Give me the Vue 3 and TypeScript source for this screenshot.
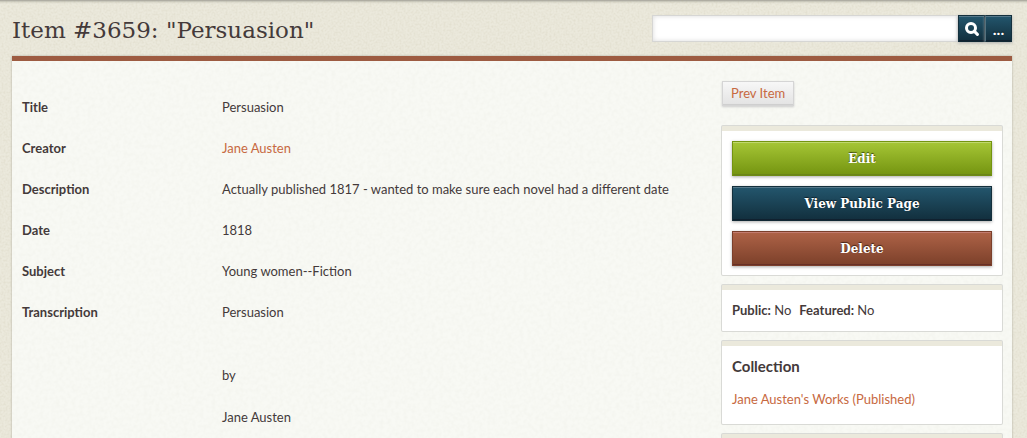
<script setup lang="ts">
import { ref } from 'vue'

interface Field {
  label: string
  lines: string[]
  href?: string
}

const query = ref<string>('')

const fields: Field[] = [
  { label: 'Title', lines: ['Persuasion'] },
  { label: 'Creator', lines: ['Jane Austen'], href: '#creator' },
  { label: 'Description', lines: ['Actually published 1817 - wanted to make sure each novel had a different date'] },
  { label: 'Date', lines: ['1818'] },
  { label: 'Subject', lines: ['Young women--Fiction'] },
  { label: 'Transcription', lines: ['Persuasion', '', 'by', 'Jane Austen'] },
]
</script>

<template>
  <div class="page">
    <svg class="grain" aria-hidden="true">
      <filter id="page-grain" x="0" y="0" width="100%" height="100%">
        <feTurbulence type="fractalNoise" baseFrequency="0.5" numOctaves="2" seed="4" />
        <feColorMatrix values="0 0 0 0 0.45  0 0 0 0 0.4  0 0 0 0 0.25  0.32 0 0 0 -0.12" />
      </filter>
      <rect width="100%" height="100%" filter="url(#page-grain)" />
    </svg>

    <header class="top">
      <h1>Item #3659: "Persuasion"</h1>
      <form class="search" role="search" @submit.prevent>
        <input v-model="query" type="text" aria-label="Search" />
        <button type="submit" class="blue" aria-label="Submit search">
          <svg viewBox="0 0 14 14" width="14" height="14" aria-hidden="true">
            <circle cx="6" cy="6" r="4.5" fill="none" stroke="#fff" stroke-width="3" />
            <path d="M9.4 9.4 12.4 12.4" stroke="#fff" stroke-width="3" stroke-linecap="round" />
          </svg>
        </button>
        <button type="button" class="blue more" aria-label="Advanced search">...</button>
      </form>
    </header>

    <main class="content">
      <svg class="grain" aria-hidden="true">
        <filter id="paper-grain" x="0" y="0" width="100%" height="100%">
          <feTurbulence type="fractalNoise" baseFrequency="0.25" numOctaves="2" seed="9" />
          <feColorMatrix values="0 0 0 0 0.5  0 0 0 0 0.5  0 0 0 0 0.4  0.13 0 0 0 -0.045" />
        </filter>
        <rect width="100%" height="100%" filter="url(#paper-grain)" />
      </svg>

      <dl class="fields">
        <div v-for="field in fields" :key="field.label" class="field">
          <dt>{{ field.label }}</dt>
          <dd>
            <template v-for="(line, i) in field.lines" :key="i">
              <p v-if="line"><a v-if="field.href" :href="field.href">{{ line }}</a><template v-else>{{ line }}</template></p>
              <br v-else />
            </template>
          </dd>
        </div>
      </dl>

      <aside class="side">
        <a class="prev" href="#prev">Prev Item</a>
        <section class="panel actions">
          <button type="button" class="green">Edit</button>
          <button type="button" class="blue">View Public Page</button>
          <button type="button" class="red">Delete</button>
        </section>
        <section class="panel status">
          <span><strong>Public:</strong> No</span>
          <span><strong>Featured:</strong> No</span>
        </section>
        <section class="panel collection">
          <h2>Collection</h2>
          <a href="#collection">Jane Austen's Works (Published)</a>
        </section>
        <section class="panel"></section>
      </aside>
    </main>
  </div>
</template>

<style>
body {
  margin: 0;
}
</style>

<style scoped>
.page {
  position: relative;
  isolation: isolate;
  display: flex;
  flex-direction: column;
  box-sizing: border-box;
  height: 100vh;
  overflow: hidden;
  padding: 0 15px 0 12px;
  background: #ebe9dc;
  box-shadow: inset 0 4px 3px -3px #8f8d85;
  color: #443a3a;
  font: 13px/21px Lato, 'Open Sans', sans-serif;
}
.grain {
  position: absolute;
  inset: 0;
  z-index: -1;
  width: 100%;
  height: 100%;
}
.top {
  display: flex;
  justify-content: space-between;
  align-items: flex-start;
  padding: 15px 0 14px;
}
h1 {
  margin: 0;
  padding-top: 3px;
  font: 23px/24px 'DejaVu Serif', serif;
}
.search {
  display: flex;
  width: 360px;
}
.search input {
  flex: 1;
  min-width: 0;
  box-sizing: border-box;
  height: 27px;
  padding: 0 8px;
  border: 1px solid #d6d6d4;
  border-right: 0;
  border-radius: 0;
  background: #fff;
  box-shadow: inset 0 0 5px #dcdcdc;
  font: inherit;
  color: inherit;
  outline: none;
}
button {
  padding: 0;
  border: 1px solid;
  color: #fff;
  font: bold 12px/20px 'DejaVu Serif', serif;
  text-shadow: 0 -1px 1px rgba(0, 0, 0, 0.6);
  cursor: pointer;
}
.search button {
  display: flex;
  align-items: center;
  justify-content: center;
  width: 27px;
  height: 27px;
}
.search .more {
  border-left-color: #55727e;
  font: bold 16px/20px Lato, sans-serif;
}
.green {
  border-color: #749410 #749410 #6d8a14;
  background: linear-gradient(#a6c636, #749410);
  box-shadow: inset 0 1px #c0d86e, inset 0 -1px #6a8518, 0 1px 3px #aaa;
}
.blue {
  border-color: #14303d #14303d #102733;
  background: linear-gradient(#23566d, #122f3d);
  box-shadow: inset 0 1px #55788a, inset 0 -1px #10212f, 0 1px 3px #aaa;
}
.red {
  border-color: #7b3f2b;
  background: linear-gradient(#ae6347, #7c402a);
  box-shadow: inset 0 1px #c37c70, inset 0 -1px #672f27, 0 1px 3px #aaa;
}
.content {
  position: relative;
  isolation: isolate;
  flex: 1 0 auto;
  display: flex;
  gap: 20px;
  padding: 20px 10px 0;
  border-top: 5px solid #9d5b41;
  background: #f8f9f4;
  box-shadow: 0 0 2px #aaa89c;
}
.fields {
  flex: 1;
  min-width: 0;
  margin: 0;
  padding-top: 16px;
}
.field {
  display: grid;
  grid-template-columns: 200px 1fr;
  margin-bottom: 20px;
}
dt,
strong {
  font-weight: bold;
}
dd {
  margin: 0;
}
p {
  margin: 0 0 21px;
}
p:last-child {
  margin-bottom: 0;
}
a {
  color: #c76941;
  text-decoration: none;
}
.side {
  display: flex;
  flex-direction: column;
  gap: 10px;
  width: 280px;
}
.prev {
  align-self: flex-start;
  margin-bottom: 10px;
  padding: 1px 8px;
  border: 1px solid #d5d5d5;
  background: linear-gradient(#f7f7f7, #e3e3e3);
  box-shadow: inset 0 -1px #cfcfcf, 0 1px 2px #ccc;
}
.panel {
  padding: 10px;
  border-top: 5px solid #ebe9dc;
  border-radius: 1px;
  background: #fff;
  box-shadow: 0 0 0 1px #d9dad6;
}
.actions {
  display: flex;
  flex-direction: column;
  gap: 10px;
  padding-bottom: 9px;
}
.actions button {
  height: 35px;
}
.status {
  display: flex;
  gap: 8px;
}
.collection {
  display: flex;
  flex-direction: column;
  gap: 12px;
  padding-bottom: 14px;
}
h2 {
  margin: 0;
  font-size: 15px;
  line-height: 21px;
}
</style>
